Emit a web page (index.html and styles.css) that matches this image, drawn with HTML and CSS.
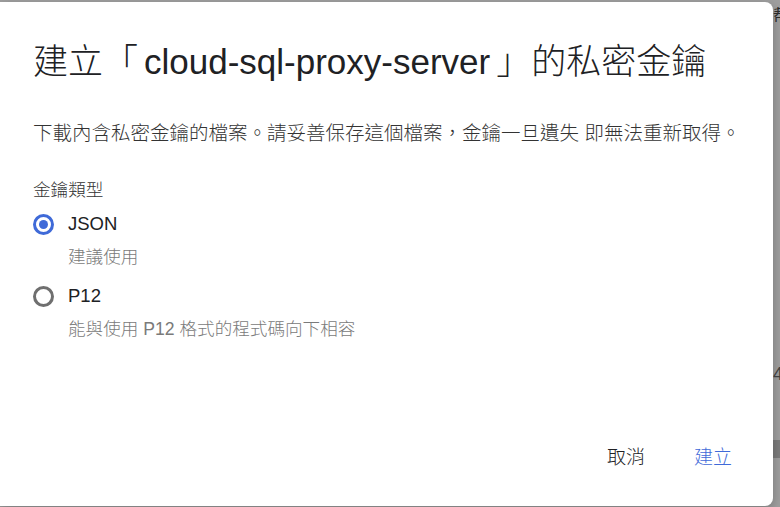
FILE: index.html
```html
<!DOCTYPE html>
<html lang="zh-Hant">
<head>
  <meta charset="UTF-8">
  <meta name="viewport" content="width=device-width, initial-scale=1.0">
  <title>建立私密金鑰</title>
  <link rel="stylesheet" href="styles.css">
</head>
<body>
  <!-- page behind the dimmed backdrop -->
  <div class="behind">
    <span class="behind-glyph">帮</span>
    <span class="behind-num">4</span>
    <span class="behind-bar"></span>
  </div>

  <div class="dialog" role="dialog">
    <h2 class="dialog-title">建立「<span class="title-name">cloud-sql-proxy-server</span>」的私密金鑰</h2>

    <p class="dialog-text">下載內含私密金鑰的檔案。請妥善保存這個檔案，金鑰一旦遺失 即無法重新取得。</p>

    <div class="key-type">
      <div class="key-type-label">金鑰類型</div>

      <label class="radio-row">
        <span class="radio checked"></span>
        <span class="radio-label">JSON</span>
      </label>
      <div class="radio-hint">建議使用</div>

      <label class="radio-row">
        <span class="radio"></span>
        <span class="radio-label">P12</span>
      </label>
      <div class="radio-hint">能與使用 P12 格式的程式碼向下相容</div>
    </div>

    <div class="dialog-actions">
      <button class="btn">取消</button>
      <button class="btn btn-primary">建立</button>
    </div>
  </div>
</body>
</html>
```

FILE: styles.css
```css
html, body {
  height: 100%;
}

body {
  margin: 0;
  padding-top: 2px;
  box-sizing: border-box;
  background-color: #9f9f9f;
  font-family: "Liberation Sans", "Noto Sans CJK TC", sans-serif;
  color: #202124;
  overflow: hidden;
}

/* bits of the page under the backdrop */
.behind {
  position: absolute;
  top: 0;
  right: 0;
  width: 7px;
  height: 100%;
}

.behind-glyph {
  position: absolute;
  top: 2px;
  left: 0;
  font-size: 16px;
  color: #2c2c2c;
}

.behind-num {
  position: absolute;
  top: 364px;
  left: 0;
  font-size: 18px;
  color: #444;
}

.behind-bar {
  position: absolute;
  top: 440px;
  left: 0;
  width: 7px;
  height: 18px;
  background-color: #7c7c7c;
}

.dialog {
  position: relative;
  width: 773px;
  height: 504px;
  box-sizing: border-box;
  display: flex;
  flex-direction: column;
  background-color: #fff;
  border-radius: 0 8px 8px 0;
  box-shadow: 0 4px 12px rgba(0, 0, 0, 0.25);
}

.dialog-title {
  margin: 0;
  padding: 40px 0 0 33px;
  font-size: 35px;
  font-weight: 300;
  line-height: 40px;
  white-space: nowrap;
}

.title-name {
  padding: 0 6px;
}

.dialog-text {
  margin: 37px 0 0 33px;
  font-size: 19.5px;
  font-weight: 300;
  line-height: 28px;
  color: #333;
  white-space: nowrap;
}

.key-type {
  margin: 31px 0 0 33px;
}

.key-type-label {
  font-size: 17.6px;
  font-weight: 300;
  line-height: 24px;
  color: #333;
}

.radio-row {
  display: flex;
  align-items: center;
  height: 32px;
  margin-top: 6px;
  cursor: pointer;
}

.radio-row + .radio-hint + .radio-row {
  margin-top: 11px;
}

.radio {
  width: 21px;
  height: 21px;
  box-sizing: border-box;
  border: 3px solid #6f6f6f;
  border-radius: 50%;
  display: flex;
  align-items: center;
  justify-content: center;
}

.radio.checked {
  border-color: #3f6ad8;
}

.radio.checked::after {
  content: "";
  width: 9px;
  height: 9px;
  border-radius: 50%;
  background-color: #3f6ad8;
}

.radio-label {
  margin-left: 14px;
  font-size: 18.5px;
  color: #202124;
}

.radio-hint {
  margin-top: 5px;
  padding-left: 35px;
  font-size: 17.6px;
  font-weight: 300;
  line-height: 24px;
  color: #7a7a7a;
}

.dialog-actions {
  margin-top: auto;
  padding: 0 25px 33px 0;
  display: flex;
  justify-content: flex-end;
  gap: 17px;
}

.btn {
  height: 36px;
  padding: 0 16px;
  font-family: inherit;
  font-size: 19px;
  font-weight: 300;
  color: #202124;
  background: none;
  border: none;
  border-radius: 4px;
  cursor: pointer;
}

.btn-primary {
  color: #3f6ad8;
}
```
